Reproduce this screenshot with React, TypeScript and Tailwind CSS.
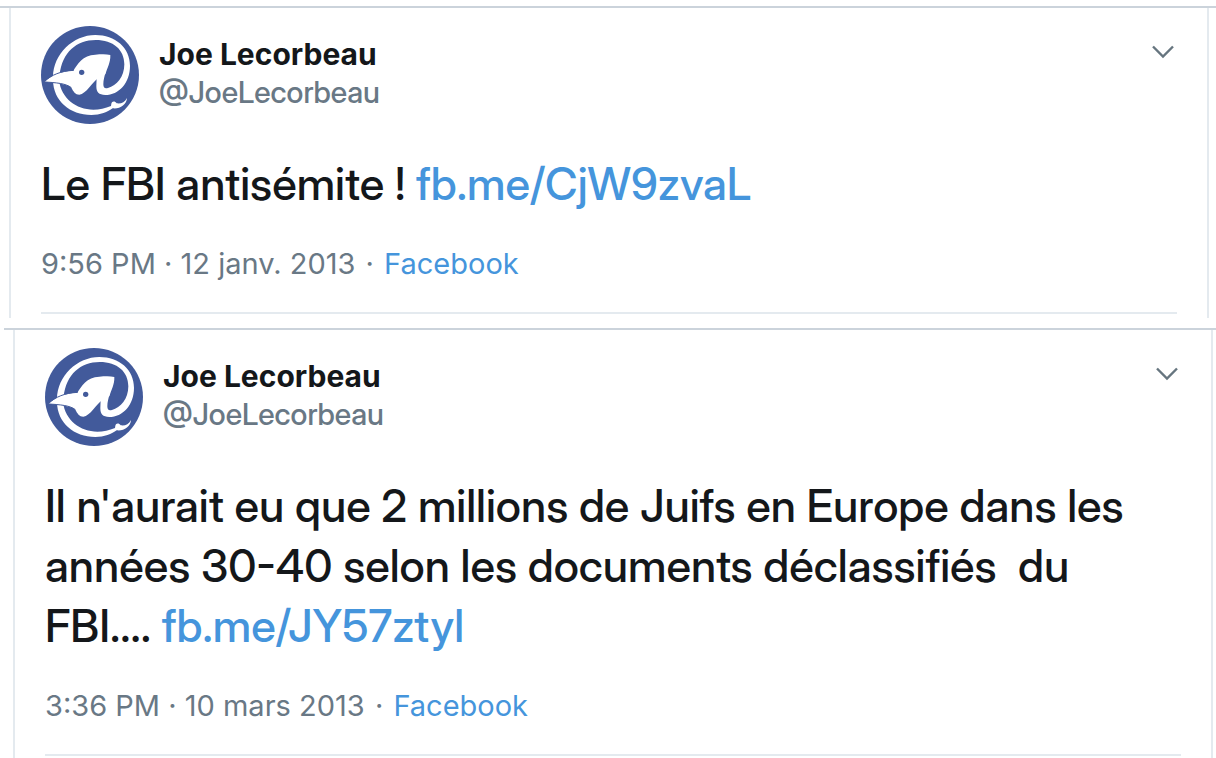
import { clsx } from 'clsx'

interface Tweet {
  id: string
  text: string
  link: string
  time: string
  date: string
}

const author = { name: 'Joe Lecorbeau', handle: '@JoeLecorbeau' }

const tweets: Tweet[] = [
  {
    id: 'first',
    text: 'Le FBI antisémite !',
    link: 'fb.me/CjW9zvaL',
    time: '9:56 PM',
    date: '12 janv. 2013',
  },
  {
    id: 'second',
    text: "Il n'aurait eu que 2 millions de Juifs en Europe dans les années 30-40 selon les documents déclassifiés  du FBI....",
    link: 'fb.me/JY57ztyl',
    time: '3:36 PM',
    date: '10 mars 2013',
  },
]

function Avatar() {
  return (
    <svg viewBox="33 33 294 294" className="size-[98px] shrink-0" role="img" aria-label={author.name}>
      <circle cx="180" cy="180" r="147" fill="#425a9b" />
      {/* outer ring of the @ */}
      <path
        d="M69 186C70 116 130 60 196 60C256 60 300 98 300 152C300 204 266 240 226 240C206 240 199 231 199 214L200 186L228 168C223 184 220 196 220 208C220 219 225 222 234 219C260 212 283 186 283 148C283 104 250 75 197 75C140 75 96 112 89 180Z"
        fill="#fff"
      />
      <path
        d="M69 196C70 258 120 300 184 300C210 300 234 291 248 280C268 283 290 270 291 249C284 262 273 267 260 265C255 258 246 258 244 266L243 273C226 280 208 284 190 284C138 284 94 250 87 196Z"
        fill="#fff"
      />
      {/* head and beak */}
      <path
        d="M44 200C64 181 92 168 130 167C142 148 158 120 196 119C212 118 228 117 241 120C242 142 232 158 226 178L204 190C188 200 168 238 148 239C136 239 130 229 124 218C114 208 84 204 44 200Z"
        fill="#fff"
      />
      <path d="M44 199C64 180 92 168 131 166" fill="none" stroke="#425a9b" strokeWidth="3" />
      <path d="M44 201C78 203 108 205 124 218" fill="none" stroke="#425a9b" strokeWidth="3" />
      <circle cx="155" cy="172" r="8" fill="#425a9b" />
    </svg>
  )
}

function TweetCard({ tweet, last }: { tweet: Tweet; last: boolean }) {
  return (
    <article className={clsx('border-t-2 border-[#cbd3db]', last ? 'ml-1' : 'mb-2.5')}>
      <div className={clsx('ml-[9px] border-x-2 border-[#e4eaef] px-[30px]', last ? 'mr-[3px] pb-0.5' : 'mr-[7px] pb-1')}>
        <header className="flex items-start pt-[18px]">
          <Avatar />
          <div className="ml-5 grow pt-[9px] text-[30px] leading-[38px]">
            <h2 className="font-[Inter,'Liberation_Sans',sans-serif] font-bold">{author.name}</h2>
            <p className="font-[450] text-[#697885]">{author.handle}</p>
          </div>
          <button type="button" aria-label="Plus" className="mt-3.5 mr-0.5 cursor-pointer">
            <svg viewBox="0 0 24 24" className="size-6" fill="none" stroke="#66757f" strokeWidth="2.4">
              <path d="M2 6.5L12 16.5L22 6.5" />
            </svg>
          </button>
        </header>
        <p className="mt-[30px] text-[45px] leading-[60px] font-[450] whitespace-pre-wrap">
          {tweet.text}{'\u00a0'}
          <a href={`https://${tweet.link}`} className="text-[#4595dc]">{tweet.link}</a>
        </p>
        <p className="border-b-2 border-[#e4eaef] pt-7 pb-[26px] font-[Inter,'Liberation_Sans',sans-serif] text-[29px] leading-[44px] text-[#697885]">
          <time>{tweet.time} · {tweet.date}</time>
          <span className="px-0.5"> · </span>
          <a href="https://facebook.com" className="text-[#4595dc]">Facebook</a>
        </p>
      </div>
    </article>
  )
}

export default function App() {
  return (
    <main className="bg-white pt-1.5 font-['Inter_Display',Inter,'Liberation_Sans',sans-serif] text-[#14171a]">
      {tweets.map((tweet, index) => (
        <TweetCard key={tweet.id} tweet={tweet} last={index === tweets.length - 1} />
      ))}
    </main>
  )
}
